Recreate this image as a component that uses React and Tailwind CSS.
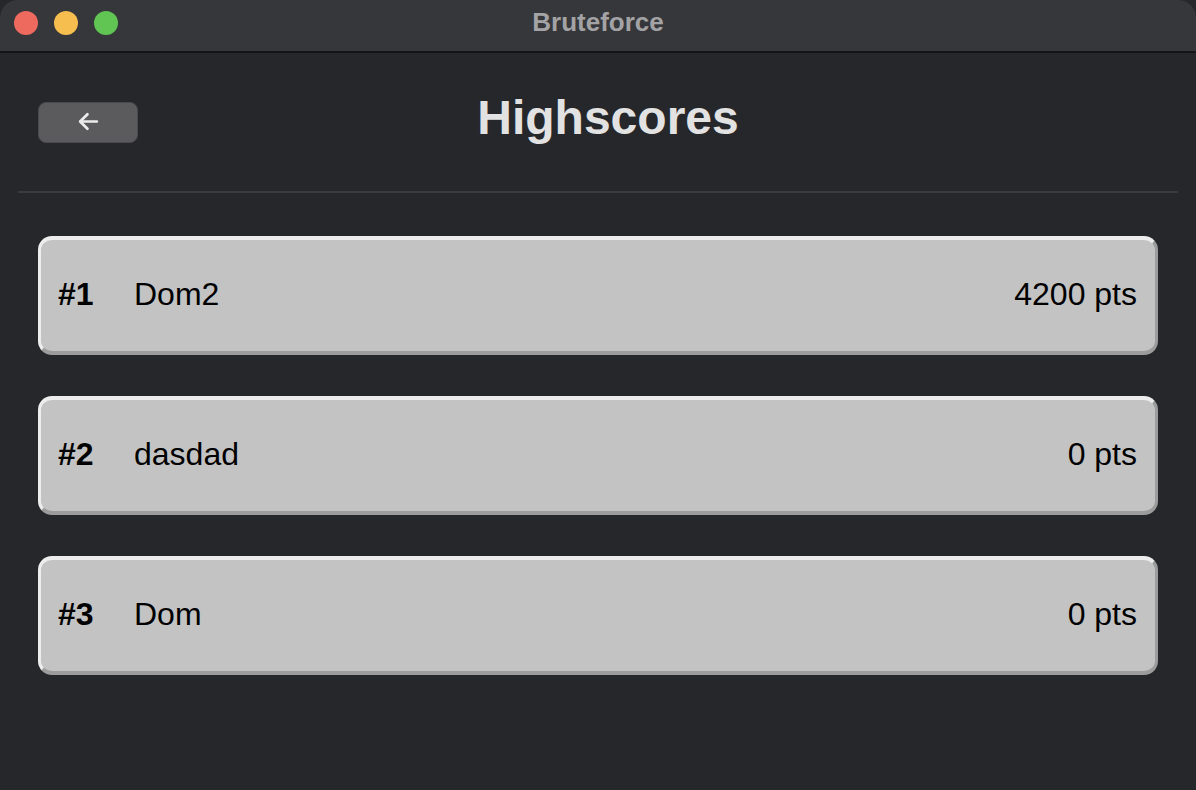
import React from "react";

const scores = [
  { rank: 1, name: "Dom2", pts: "4200 pts" },
  { rank: 2, name: "dasdad", pts: "0 pts" },
  { rank: 3, name: "Dom", pts: "0 pts" },
];

export default function App() {
  return (
    <div
      className="w-[1196px] h-[790px] bg-[#26272b] flex flex-col overflow-hidden"
      style={{ fontFamily: '"Liberation Sans", Arial, sans-serif' }}
    >
      {/* Title bar */}
      <div className="relative h-[53px] shrink-0 bg-[#36373a] border-b-2 border-[#151517] flex items-center justify-center rounded-t-[18px]">
        <div className="absolute left-[14px] top-[11px] flex gap-[16px]">
          <div className="w-[24px] h-[24px] rounded-full bg-[#ee6a5f]" />
          <div className="w-[24px] h-[24px] rounded-full bg-[#f5be4f]" />
          <div className="w-[24px] h-[24px] rounded-full bg-[#61c554]" />
        </div>
        <span className="text-[26px] font-bold text-[#a3a3a5] -mt-[6px]">Bruteforce</span>
      </div>

      {/* Content */}
      <div className="px-[18px] flex flex-col">
        <div className="h-[140px] flex items-center px-5 border-b-2 border-[#3a3b3f]">
          <button className="w-[100px] h-[41px] rounded-[8px] bg-[#5b5b5d] border border-[#4a4a4c] flex items-center justify-center">
            <svg width="25" height="25" viewBox="0 0 24 24" fill="none" stroke="#ececec" strokeWidth="2.6" strokeLinecap="round" strokeLinejoin="round" className="-mt-[2px]">
              <path d="M20 12H4.5" />
              <path d="M11 5l-7 7 7 7" />
            </svg>
          </button>
          <h1 className="flex-1 text-center text-[48px] font-bold text-[#e2e2e2] leading-none -mt-[8px]">Highscores</h1>
          <div className="w-[80px]" />
        </div>

        <div className="px-5 pt-[43px] flex flex-col gap-[41px]">
          {scores.map((s) => (
            <div
              key={s.rank}
              className="h-[119px] shrink-0 rounded-[14px] bg-[#c3c3c3] border-t-[4px] border-l-[3px] border-b-[4px] border-r-[3px] border-t-[#ededed] border-l-[#ededed] border-b-[#9c9c9c] border-r-[#9c9c9c] flex items-center pl-[17px] pr-[18px] pb-[4px] text-black"
            >
              <span className="w-[76px] text-[32px] font-bold">#{s.rank}</span>
              <span className="flex-1 text-[32px]">{s.name}</span>
              <span className="text-[32px]">{s.pts}</span>
            </div>
          ))}
        </div>
      </div>
    </div>
  );
}
